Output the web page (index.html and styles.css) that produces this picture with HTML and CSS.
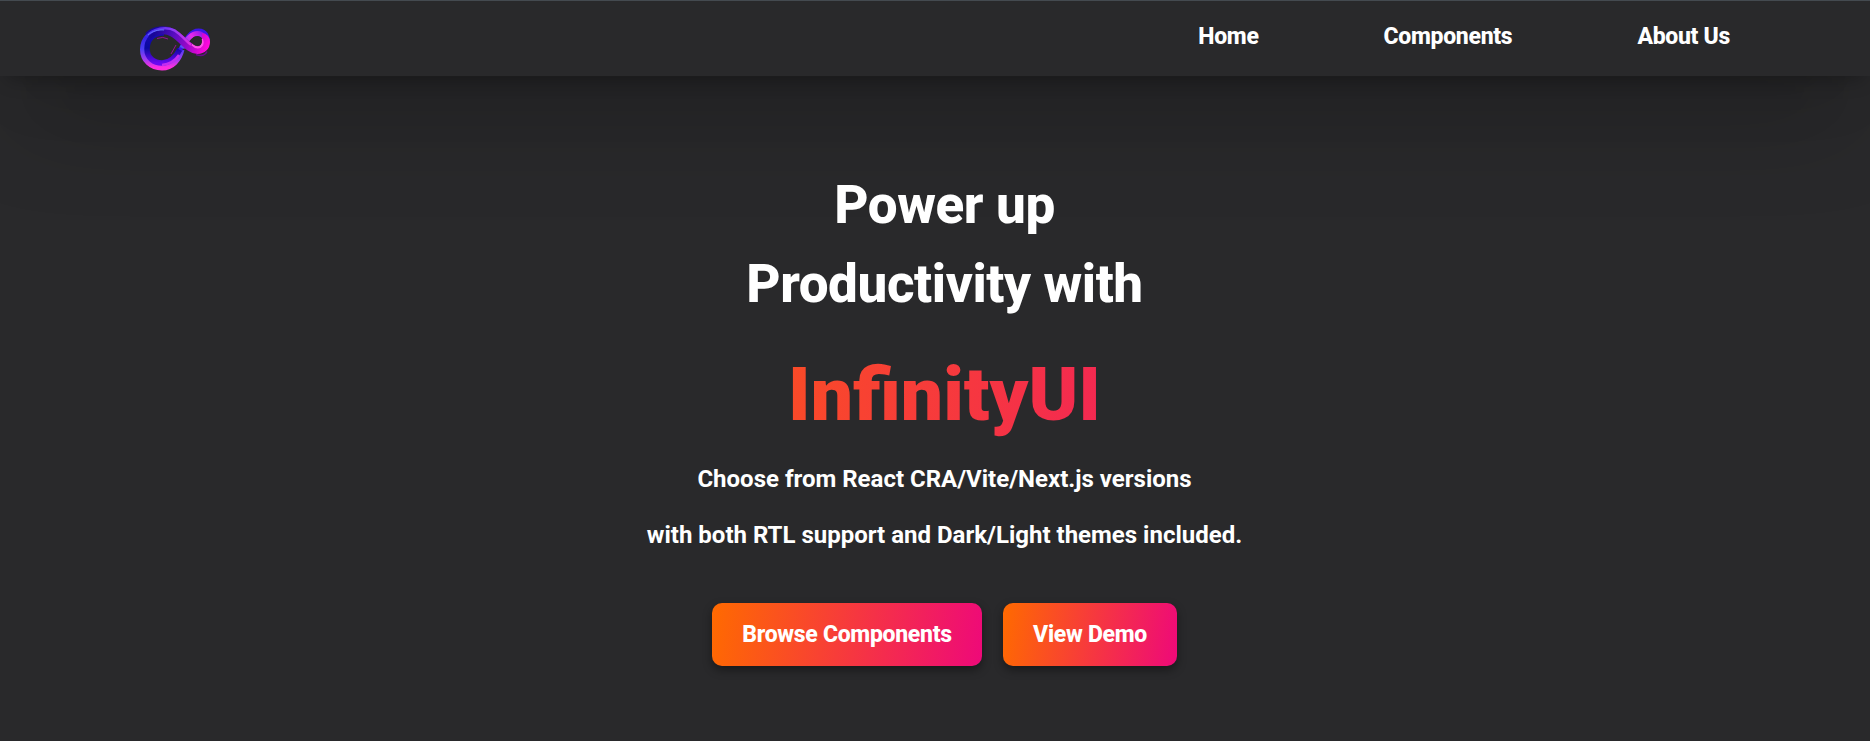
FILE: index.html
```html
<!DOCTYPE html>
<html lang="en">
<head>
<meta charset="utf-8">
<title>InfinityUI</title>
<link rel="stylesheet" href="styles.css">
</head>
<body>
<header class="navbar">
  <a class="logo" href="#" aria-label="InfinityUI">
    <svg width="72" height="46" viewBox="0 0 72 46" fill="none">
      <defs>
        <linearGradient id="outer" x1="0" y1="0" x2="0" y2="1">
          <stop offset="0" stop-color="#2a14d8"/><stop offset=".5" stop-color="#4a3cf4"/><stop offset=".78" stop-color="#a03cf0"/><stop offset="1" stop-color="#ff2ee0"/>
        </linearGradient>
        <linearGradient id="inner" x1="0" y1="0" x2="0" y2="1">
          <stop offset="0" stop-color="#1a0ab0"/><stop offset=".5" stop-color="#0a08a0"/><stop offset="1" stop-color="#6a08f0"/>
        </linearGradient>
        <linearGradient id="band" gradientUnits="userSpaceOnUse" x1="16" y1="4" x2="66" y2="24">
          <stop offset="0" stop-color="#180898"/><stop offset=".35" stop-color="#5a0cc0"/><stop offset=".65" stop-color="#9a08c8"/><stop offset="1" stop-color="#ff08dc"/>
        </linearGradient>
        <linearGradient id="edge" gradientUnits="userSpaceOnUse" x1="8" y1="6" x2="50" y2="20">
          <stop offset="0" stop-color="#3a28f0"/><stop offset=".5" stop-color="#8a3cf4"/><stop offset="1" stop-color="#e030e0"/>
        </linearGradient>
        <linearGradient id="small" gradientUnits="userSpaceOnUse" x1="42" y1="24" x2="68" y2="6">
          <stop offset="0" stop-color="#4058f8"/><stop offset=".5" stop-color="#e828ec"/><stop offset="1" stop-color="#6a10e8"/>
        </linearGradient>
      </defs>
      <path d="M56 28.500q8 3 11-3" stroke="#6d0790" stroke-width="1.5"/>
      <path d="M23 4.500C11 4.500 3 13 3 23.500S11 41.500 22 41.500c10 0 17-8 19.500-18" stroke="url(#outer)" stroke-width="6"/>
      <path d="M24 7C13 6.500 7 14 7 23S14 37 22 37c9 0 14-6 18-14" stroke="url(#inner)" stroke-width="5.500"/>
      <path d="M22 39q11-1 17-10" stroke="#c52df0" stroke-width="2.500"/>
      <path d="M17 12.500q6-2.500 11 .5M36 19l-5 9" stroke="#b40cae" stroke-width=".8"/>
      <path d="M40 24C46 12 51 4.500 58.500 4.500S68 11 68 16" stroke="#3c15e8" stroke-width="4"/>
      <path d="M42 22C47 12 52 7.500 57.500 7.500S65.500 12 65.500 17" stroke="url(#small)" stroke-width="5"/>
      <path d="M8 10C14 4 25 2.500 33 7c10 6 16 17 24.500 17 5 0 8.500-3.500 8.500-8 0-3-2-5-4-5" stroke="url(#band)" stroke-width="8"/>
      <path d="M6 11C13 2 27 .3 35 4.700c8 5 11 11 16 14" stroke="url(#edge)" stroke-width="2.500"/>
      <path d="M8 9C12 5 19 3.500 24 4" stroke="#6675f8" stroke-width="1"/>
      <path d="M52 18.500q4 4 8 2.500 4-2 2-8" stroke="#ff54e8" stroke-width="2"/>
      <ellipse cx="57" cy="15" rx="5" ry="4.800" fill="#29292b"/>
    </svg>
  </a>
  <nav class="links">
    <a href="#">Home</a>
    <a href="#">Components</a>
    <a href="#">About Us</a>
  </nav>
</header>
<main class="hero">
  <h1 class="title">Power up<br>Productivity with</h1>
  <div class="brand">InfinityUI</div>
  <p class="lead">Choose from React CRA/Vite/Next.js versions<br>with both RTL support and Dark/Light themes included.</p>
  <div class="actions">
    <a class="button button-wide" href="#">Browse Components</a>
    <a class="button button-demo" href="#">View Demo</a>
  </div>
</main>
</body>
</html>
```

FILE: styles.css
```css
* { box-sizing: border-box; }
body {
  margin: 0;
  height: 741px;
  overflow: hidden;
  background: #29292b;
  color: #fff;
  font-family: Roboto, sans-serif;
  font-weight: 700;
}
a { color: inherit; text-decoration: none; }
.navbar {
  height: 76px;
  display: flex;
  justify-content: space-between;
  align-items: flex-start;
  padding: 0 140px;
  border-top: 1px solid #444a50;
  background: #29292b;
  box-shadow: rgba(0, 0, 0, .35) 0 50px 100px -20px, rgba(0, 0, 0, .35) 0 30px 60px -30px, rgba(0, 0, 0, .3) 0 10px 20px -8px;
}
.logo { padding-top: 25px; }
.logo svg { display: block; }
.links {
  display: flex;
  gap: 125px;
  font-size: 23px;
  font-weight: 800;
  letter-spacing: -.3px;
  line-height: 34px;
  padding-top: 19px;
}
.hero {
  display: flex;
  flex-direction: column;
  align-items: center;
  text-align: center;
  padding: 90px 0 0 19px;
}
.title {
  margin: 0;
  font-size: 53px;
  line-height: 79px;
  font-weight: 800;
  letter-spacing: -.4px;
}
.brand {
  width: 900px;
  margin-top: 20px;
  font-size: 75px;
  line-height: 100px;
  font-weight: 900;
  background: linear-gradient(98deg, #ff6a00, #ee0979);
  -webkit-background-clip: text;
  background-clip: text;
  color: transparent;
}
.lead { margin: 7px 0 0; font-size: 24px; line-height: 56px; }
.actions { display: flex; gap: 21px; margin-top: 40px; }
.button {
  height: 63px;
  border-radius: 10px;
  background: linear-gradient(98deg, #ff6a00, #ee0979);
  box-shadow: 0 4px 10px rgba(0, 0, 0, .4);
  font-size: 23px;
  font-weight: 800;
  line-height: 64px;
  letter-spacing: -.3px;
}
.button-wide { width: 270px; }
.button-demo { width: 174px; }
```
